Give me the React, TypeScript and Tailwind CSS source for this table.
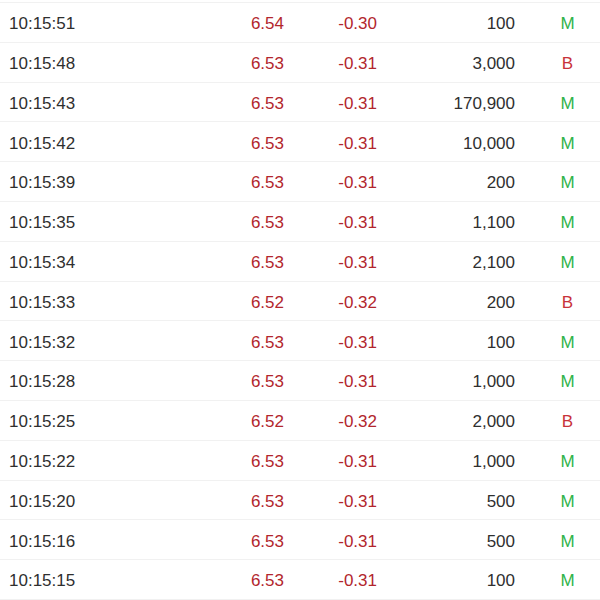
const TRADES: [string, string, string, string, "M" | "B"][] = [
  ["10:15:51", "6.54", "-0.30", "100", "M"],
  ["10:15:48", "6.53", "-0.31", "3,000", "B"],
  ["10:15:43", "6.53", "-0.31", "170,900", "M"],
  ["10:15:42", "6.53", "-0.31", "10,000", "M"],
  ["10:15:39", "6.53", "-0.31", "200", "M"],
  ["10:15:35", "6.53", "-0.31", "1,100", "M"],
  ["10:15:34", "6.53", "-0.31", "2,100", "M"],
  ["10:15:33", "6.52", "-0.32", "200", "B"],
  ["10:15:32", "6.53", "-0.31", "100", "M"],
  ["10:15:28", "6.53", "-0.31", "1,000", "M"],
  ["10:15:25", "6.52", "-0.32", "2,000", "B"],
  ["10:15:22", "6.53", "-0.31", "1,000", "M"],
  ["10:15:20", "6.53", "-0.31", "500", "M"],
  ["10:15:16", "6.53", "-0.31", "500", "M"],
  ["10:15:15", "6.53", "-0.31", "100", "M"],
];

export default function App() {
  return (
    <div className="w-[600px] h-[600px] overflow-hidden bg-white pt-[2px] font-['Liberation_Sans',sans-serif] text-[17px]">
      <div className="border-t border-[#f1f1f1]">
        {TRADES.map(([time, price, change, vol, side]) => (
          <div key={time} className="grid grid-cols-[200px_84px_93px_138px_85px] items-center h-[39.8px] pt-[3px] border-b border-[#f1f1f1]">
            <div className="pl-[9px] text-[#2f2f2f]">{time}</div>
            <div className="text-right text-[#b2262d]">{price}</div>
            <div className="text-right text-[#b2262d]">{change}</div>
            <div className="text-right text-[#2f2f2f]">{vol}</div>
            <div className={["pl-[20px] text-center", side === "M" ? "text-[#2fb34a]" : "text-[#c8323a]"].join(" ")}>{side}</div>
          </div>
        ))}
      </div>
    </div>
  );
}
